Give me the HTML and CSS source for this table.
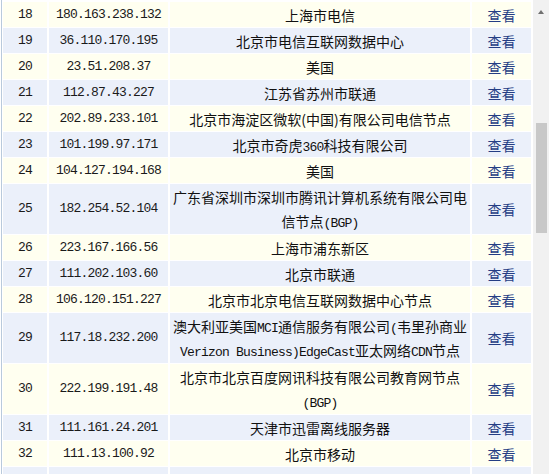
FILE: index.html
```html
<!DOCTYPE html>
<html lang="zh-CN">
<head>
<meta charset="utf-8">
<title>IP 列表</title>
<link rel="stylesheet" href="styles.css">
</head>
<body>
<div class="page">
  <div class="frame">
    <table class="list">
      <colgroup>
        <col class="c-no"><col class="c-ip"><col class="c-loc"><col class="c-act">
      </colgroup>
      <tbody>
        <tr class="y"><td class="mono">18</td><td class="mono">180.163.238.132</td><td class="loc">上海市电信</td><td class="act">查看</td></tr>
        <tr class="b"><td class="mono">19</td><td class="mono">36.110.170.195</td><td class="loc">北京市电信互联网数据中心</td><td class="act">查看</td></tr>
        <tr class="y"><td class="mono">20</td><td class="mono">23.51.208.37</td><td class="loc">美国</td><td class="act">查看</td></tr>
        <tr class="b"><td class="mono">21</td><td class="mono">112.87.43.227</td><td class="loc">江苏省苏州市联通</td><td class="act">查看</td></tr>
        <tr class="y"><td class="mono">22</td><td class="mono">202.89.233.101</td><td class="loc">北京市海淀区微软(中国)有限公司电信节点</td><td class="act">查看</td></tr>
        <tr class="b"><td class="mono">23</td><td class="mono">101.199.97.171</td><td class="loc">北京市奇虎<span class="lat">360</span>科技有限公司</td><td class="act">查看</td></tr>
        <tr class="y"><td class="mono">24</td><td class="mono">104.127.194.168</td><td class="loc">美国</td><td class="act">查看</td></tr>
        <tr class="b two"><td class="mono">25</td><td class="mono">182.254.52.104</td><td class="loc">广东省深圳市深圳市腾讯计算机系统有限公司电<br>信节点<span class="lat">(BGP)</span></td><td class="act">查看</td></tr>
        <tr class="y"><td class="mono">26</td><td class="mono">223.167.166.56</td><td class="loc">上海市浦东新区</td><td class="act">查看</td></tr>
        <tr class="b"><td class="mono">27</td><td class="mono">111.202.103.60</td><td class="loc">北京市联通</td><td class="act">查看</td></tr>
        <tr class="y"><td class="mono">28</td><td class="mono">106.120.151.227</td><td class="loc">北京市北京电信互联网数据中心节点</td><td class="act">查看</td></tr>
        <tr class="b two"><td class="mono">29</td><td class="mono">117.18.232.200</td><td class="loc">澳大利亚美国<span class="lat">MCI</span>通信服务有限公司<span class="lat">(</span>韦里孙商业<br><span class="lat">Verizon Business)EdgeCast</span>亚太网络<span class="lat">CDN</span>节点</td><td class="act">查看</td></tr>
        <tr class="y two"><td class="mono">30</td><td class="mono">222.199.191.48</td><td class="loc">北京市北京百度网讯科技有限公司教育网节点<br><span class="lat">(BGP)</span></td><td class="act">查看</td></tr>
        <tr class="b"><td class="mono">31</td><td class="mono">111.161.24.201</td><td class="loc">天津市迅雷离线服务器</td><td class="act">查看</td></tr>
        <tr class="y"><td class="mono">32</td><td class="mono">111.13.100.92</td><td class="loc">北京市移动</td><td class="act">查看</td></tr>
        <tr class="b"><td class="mono">33</td><td class="mono">43.242.166.88</td><td class="loc">香港特别行政区数据中心</td><td class="act">查看</td></tr>
      </tbody>
    </table>
  </div>
  <div class="sb">
    <div class="sb-up"></div>
    <div class="sb-thumb"></div>
  </div>
</div>
</body>
</html>
```

FILE: styles.css
```css
html, body {
  margin: 0;
  padding: 0;
  background: #ffffff;
}

body {
  font-family: "Noto Sans CJK SC", "Noto Sans", sans-serif;
  font-size: 14px;
  color: #1a1a1a;
}

.page {
  display: flex;
  width: 549px;
  height: 474px;
  overflow: hidden;
}

.frame {
  flex: 0 0 auto;
  margin-left: 1px;
  border-left: 1px solid #b9cadc;
  padding-top: 1px;
  overflow: hidden;
}

.list {
  margin-left: -1px;
  width: 532px;
  table-layout: fixed;
  border-collapse: separate;
  border-spacing: 2px 1px;
}

.c-no { width: 44px; }
.c-ip { width: 119px; }
.c-loc { width: 300px; }
.c-act { width: 59px; }

.list td {
  box-sizing: border-box;
  padding: 1px 2px 0;
  line-height: 24px;
  text-align: center;
  vertical-align: middle;
  white-space: nowrap;
  overflow: hidden;
}

.list tr.two td {
  padding-bottom: 1px;
}

.list tr.y td { background: #fffff0; }
.list tr.b td { background: #ebf0fa; }

.mono {
  font-family: "Liberation Mono", "DejaVu Sans Mono", monospace;
  font-size: 13px;
  letter-spacing: -0.8px;
  color: #1a1a1a;
}

.lat {
  font-family: "Liberation Mono", "DejaVu Sans Mono", monospace;
  font-size: 13px;
  letter-spacing: -0.8px;
  line-height: 16px;
}

.loc {
  color: #111111;
}

.act {
  color: #243d84;
}

.sb {
  flex: 0 0 16px;
  margin-left: auto;
  background: #f1f1f1;
  position: relative;
}

.sb-up {
  width: 0;
  height: 0;
  margin: 10px auto 0;
  border-left: 3.5px solid transparent;
  border-right: 3.5px solid transparent;
  border-bottom: 4px solid #707070;
}

.sb-thumb {
  margin: 109px 2px 0 3px;
  height: 110px;
  background: #c8c8c8;
}
```
